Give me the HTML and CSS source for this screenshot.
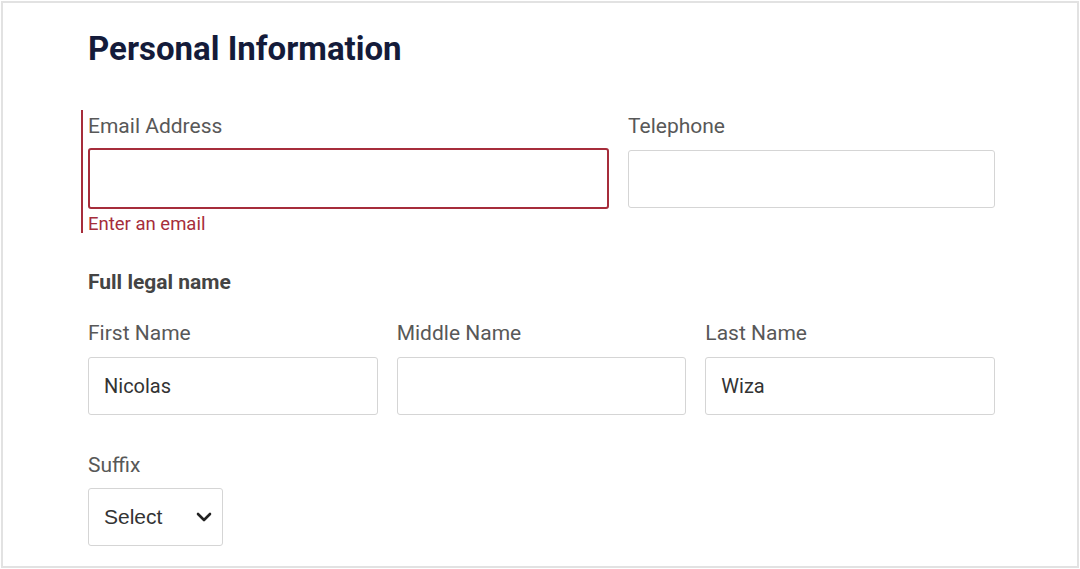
FILE: index.html
```html
<!DOCTYPE html>
<html lang="en">
<head>
<meta charset="utf-8">
<title>Personal Information</title>
<link rel="stylesheet" href="styles.css">
</head>
<body>
<div class="frame">
  <h1 class="title">Personal Information</h1>
  <div class="row row-contact">
    <div class="field field-error">
      <label class="label" for="email">Email Address</label>
      <input class="input input-error" id="email" type="text">
      <div class="error-text">Enter an email</div>
    </div>
    <div class="field field-plain">
      <label class="label" for="tel">Telephone</label>
      <input class="input" id="tel" type="text">
    </div>
  </div>
  <div class="group-title">Full legal name</div>
  <div class="row row-names">
    <div class="field">
      <label class="label" for="first">First Name</label>
      <input class="input" id="first" type="text" value="Nicolas">
    </div>
    <div class="field">
      <label class="label" for="middle">Middle Name</label>
      <input class="input" id="middle" type="text">
    </div>
    <div class="field">
      <label class="label" for="last">Last Name</label>
      <input class="input" id="last" type="text" value="Wiza">
    </div>
  </div>
  <div class="field suffix">
    <label class="label" for="suffix">Suffix</label>
    <div class="select" id="suffix">
      <span class="select-text">Select</span>
      <svg class="chevron" width="16" height="10" viewBox="0 0 16 10"><path d="M2 2 L8 8 L14 2" fill="none" stroke="#222" stroke-width="2.6" stroke-linecap="round" stroke-linejoin="round"/></svg>
    </div>
  </div>
</div>
</body>
</html>
```
FILE: styles.css
```css
* { box-sizing: border-box; }
html, body { margin: 0; padding: 0; background: #ffffff; }
body { font-family: Roboto, "Noto Sans", Arial, sans-serif; }
.frame {
  margin: 1px;
  width: 1078px;
  height: 567px;
  border: 2px solid #e2e2e2;
  padding: 24px 0 0 85px;
  overflow: hidden;
}
.title {
  margin: 0;
  font-size: 33px;
  line-height: 44px;
  font-weight: 700;
  color: #141b3a;
}
.row-contact {
  margin-top: 39px;
  display: grid;
  grid-template-columns: 521px 367px;
  column-gap: 19px;
  width: 907px;
}
.field { display: flex; flex-direction: column; }
.field-error {
  margin-left: -7px;
  padding: 4px 0 0 5px;
  border-left: 2px solid #a62d3b;
}
.field-plain { padding-top: 4px; }
.label {
  font-size: 21px;
  line-height: 24px;
  color: #585858;
  margin-bottom: 12px;
}
.field-error .label { margin-bottom: 10px; }
.input {
  display: block;
  width: 100%;
  height: 58px;
  border: 1px solid #d5d5d5;
  border-radius: 3px;
  padding: 0 15px;
  font-family: Roboto, Arial, sans-serif;
  font-size: 20px;
  color: #333333;
  background: #fff;
  outline: none;
}
.input-error {
  height: 61px;
  border: 2px solid #a62d3b;
}
.error-text {
  margin-top: 6px;
  font-size: 18.5px;
  line-height: 18px;
  color: #a62d3b;
}
.group-title {
  margin-top: 37px;
  font-size: 21px;
  line-height: 24px;
  font-weight: 700;
  color: #444444;
}
.row-names {
  margin-top: 27px;
  display: grid;
  grid-template-columns: 1fr 1fr 1fr;
  column-gap: 19px;
  width: 907px;
}
.suffix { margin-top: 38px; }
.suffix .label { margin-bottom: 11px; }
.select {
  width: 135px;
  height: 58px;
  border: 1px solid #d5d5d5;
  border-radius: 3px;
  display: flex;
  align-items: center;
  justify-content: space-between;
  padding: 0 10px 0 15px;
}
.select-text {
  font-family: "Liberation Sans", Arial, sans-serif;
  font-size: 21px;
  color: #333333;
}
.chevron { display: block; }
```
